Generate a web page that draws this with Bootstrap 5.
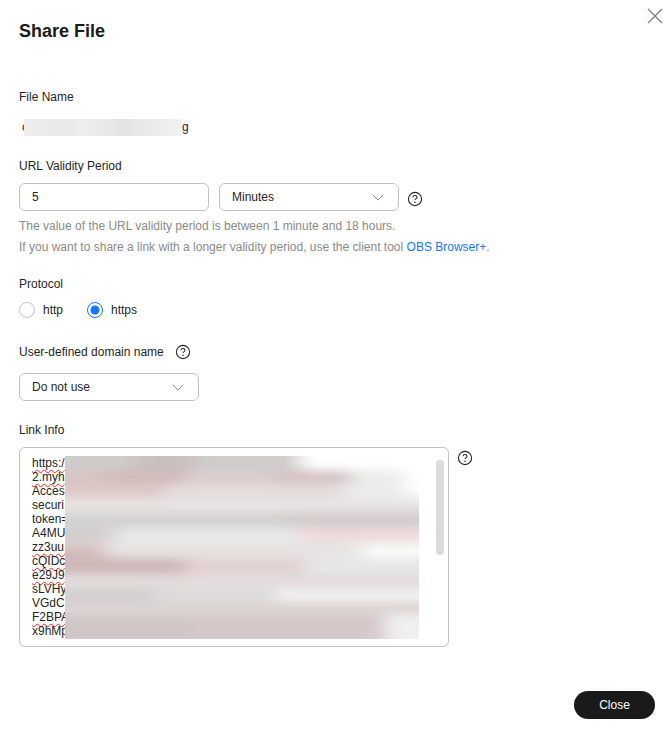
<!DOCTYPE html>
<html lang="en">
<head>
  <meta charset="UTF-8">
  <title>Share File</title>
  <meta name="viewport" content="width=device-width, initial-scale=1">
  <link href="https://cdn.jsdelivr.net/npm/bootstrap@5.3.0/dist/css/bootstrap.min.css" rel="stylesheet">
  <style>
    body {
      font-family: "Liberation Sans", Arial, sans-serif;
      font-size: 12px;
      line-height: 18px;
      color: #252525;
      background: #fff;
    }

    .share-dialog {
      width: 670px;
      height: 730px;
      padding: 8px 15px 11px 19px;
      overflow: hidden;
    }

    .share-head { height: 40px; }

    .share-title {
      font-size: 18px;
      line-height: 24px;
      font-weight: 700;
      color: #1a1a1a;
      margin: 11px 0 0;
    }

    .close-x {
      width: 16px;
      height: 16px;
      margin-right: -8px;
      padding: 0;
      border: 0;
      background: none;
      line-height: 0;
    }

    .field-label { margin-top: 0; height: 18px; }
    .label-file { margin-top: 40px; }
    .label-url { margin-top: 21px; }
    .label-protocol { margin-top: 17px; }
    .label-domain { margin-top: 24px; }
    .label-link { margin-top: 20px; }

    .file-value {
      width: 173px;
      margin-top: 12px;
      margin-left: 3px;
      height: 18px;
    }

    .file-cut {
      flex: none;
      width: 2px;
    }

    .file-blur {
      flex: none;
      width: 158px;
      height: 17px;
      background: linear-gradient(90deg, #eeeeee 0%, #e9e9e9 25%, #eeeeee 40%, #e4e4e4 62%, #ececec 85%, #f2f2f2 100%);
    }

    .share-input,
    .share-select {
      height: 28px;
      font-size: 12px;
      line-height: 18px;
      color: #252525;
      border: 1px solid #c2c2c2;
      border-radius: 6px;
      padding: 4px 12px;
      box-shadow: none;
    }

    .share-input { width: 190px; }

    .share-select {
      width: 180px;
      background-image: url("data:image/svg+xml,%3csvg xmlns='http://www.w3.org/2000/svg' viewBox='0 0 14 8'%3e%3cpath fill='none' stroke='%23808080' stroke-width='1.1' d='M1 1l6 6 6-6'/%3e%3c/svg%3e");
      background-position: right 14px center;
      background-size: 12px 7px;
    }

    .row-gap { column-gap: 10px; margin-top: 8px; }
    .row-gap-wide { margin-top: 12px; }

    .help-mark {
      flex: none;
      width: 16px;
      height: 16px;
      line-height: 0;
    }

    .help-url { margin: 8px 0 0 -2px; }
    .help-link { margin: 3px 0 0 -2px; }
    .help-domain { margin-left: 11px; }

    .hint-text {
      color: #8a8a8a;
      line-height: 21px;
    }

    .hint-first { margin-top: 5px; }

    .hint-link {
      color: #1476ff;
      text-decoration: none;
    }

    .protocol-row {
      margin-top: 8px;
      height: 18px;
    }

    .share-radio {
      display: flex;
      align-items: center;
      min-height: 0;
      margin: 0 24px 0 0;
      padding: 0;
    }

    .share-radio .form-check-input {
      float: none;
      width: 16px;
      height: 16px;
      margin: 0 8px 0 0;
      border: 1px solid #c2c2c2;
      box-shadow: none;
    }

    .share-radio .form-check-input:checked {
      background-color: #fff;
      border-color: #1476ff;
      background-image: url("data:image/svg+xml,%3csvg xmlns='http://www.w3.org/2000/svg' viewBox='0 0 16 16'%3e%3ccircle cx='8' cy='8' r='4.5' fill='%231476ff'/%3e%3c/svg%3e");
      background-size: 16px 16px;
    }

    .share-radio .form-check-label { line-height: 16px; }

    .link-box {
      width: 430px;
      height: 200px;
      border: 1px solid #c2c2c2;
      border-radius: 6px;
      padding: 8px 0 8px 12px;
    }

    .link-text {
      flex: none;
      width: 33px;
      font-size: 12px;
      line-height: 14px;
      white-space: nowrap;
      color: #252525;
    }

    .spell-bad {
      text-decoration: underline wavy #ff2020;
      text-decoration-thickness: 1px;
      text-underline-offset: 2px;
    }

    .link-blur {
      flex: none;
      width: 354px;
      height: 183px;
      display: block;
    }

    .fake-thumb {
      flex: none;
      width: 8px;
      height: 95px;
      margin: 4px 0 0 17px;
      border-radius: 4px;
      background: #dcdcdc;
    }

    .footer-row { margin-top: 44px; }

    .btn-close-share {
      width: 81px;
      height: 28px;
      padding: 0;
      font-size: 12px;
      line-height: 28px;
      border: 0;
      border-radius: 14px;
      color: #fff;
      background: #1a1a1a;
    }
  </style>
</head>
<body>

<div class="share-dialog d-flex flex-column">
  <div class="share-head d-flex justify-content-between align-items-start">
    <h1 class="share-title">Share File</h1>
    <button class="close-x" type="button" aria-label="Close">
      <svg width="16" height="16" viewBox="0 0 16 16"><path d="M1 1l14 14M15 1L1 15" fill="none" stroke="#7c7c7c" stroke-width="1.3"/></svg>
    </button>
  </div>

  <div class="field-label label-file">File Name</div>
  <div class="file-value d-flex align-items-center">
    <span class="file-cut">c</span>
    <div class="file-blur"></div>
    <span>g</span>
  </div>

  <div class="field-label label-url">URL Validity Period</div>
  <div class="d-flex row-gap">
    <input class="form-control share-input" type="text" value="5">
    <select class="form-select share-select"><option>Minutes</option></select>
    <span class="help-mark help-url">
      <svg width="16" height="16" viewBox="0 0 16 16"><circle cx="8" cy="8" r="6.6" fill="none" stroke="#252525" stroke-width="1.1"/><path d="M6 6.3c0-1.1.9-1.8 2-1.8s2 .7 2 1.7c0 1.4-2 1.4-2 2.9" fill="none" stroke="#252525" stroke-width="1.1"/><circle cx="8" cy="11.2" r=".8" fill="#252525"/></svg>
    </span>
  </div>
  <div class="hint-text hint-first">The value of the URL validity period is between 1 minute and 18 hours.</div>
  <div class="hint-text">If you want to share a link with a longer validity period, use the client tool <a class="hint-link" href="#">OBS Browser+</a>.</div>

  <div class="field-label label-protocol">Protocol</div>
  <div class="protocol-row d-flex align-items-center">
    <div class="form-check share-radio">
      <input class="form-check-input" type="radio" name="protocol" id="protoHttp">
      <label class="form-check-label" for="protoHttp">http</label>
    </div>
    <div class="form-check share-radio">
      <input class="form-check-input" type="radio" name="protocol" id="protoHttps" checked>
      <label class="form-check-label" for="protoHttps">https</label>
    </div>
  </div>

  <div class="field-label label-domain d-flex align-items-center">
    User-defined domain name
    <span class="help-mark help-domain">
      <svg width="16" height="16" viewBox="0 0 16 16"><circle cx="8" cy="8" r="6.6" fill="none" stroke="#252525" stroke-width="1.1"/><path d="M6 6.3c0-1.1.9-1.8 2-1.8s2 .7 2 1.7c0 1.4-2 1.4-2 2.9" fill="none" stroke="#252525" stroke-width="1.1"/><circle cx="8" cy="11.2" r=".8" fill="#252525"/></svg>
    </span>
  </div>
  <div class="d-flex row-gap row-gap-wide">
    <select class="form-select share-select"><option>Do not use</option></select>
  </div>

  <div class="field-label label-link">Link Info</div>
  <div class="d-flex row-gap">
    <div class="link-box d-flex">
      <div class="link-text">
        <div><span class="spell-bad">https:/</span></div>
        <div><span class="spell-bad">2.myh</span></div>
        <div>Acces</div>
        <div>securi</div>
        <div>token=</div>
        <div>A4MU</div>
        <div><span class="spell-bad">zz3uu.</span></div>
        <div><span class="spell-bad">cQIDc</span></div>
        <div><span class="spell-bad">e29J9</span></div>
        <div>sLVHy</div>
        <div>VGdC</div>
        <div><span class="spell-bad">F2BPA</span></div>
        <div>x9hMp</div>
      </div>
      <svg class="link-blur" viewBox="0 0 354 183" aria-hidden="true">
        <defs><filter id="smear" x="-10%" y="-10%" width="120%" height="120%"><feGaussianBlur stdDeviation="10 5"/></filter></defs>
        <g filter="url(#smear)">
          <rect x="-20" y="-20" width="400" height="230" fill="#ececec"/>
          <rect x="-20" y="-20" width="260" height="34" fill="#cfcccc"/>
          <rect x="70" y="-20" width="60" height="34" fill="#c9bfbf"/>
          <rect x="235" y="-20" width="140" height="34" fill="#fff"/>
          <rect x="340" y="-20" width="40" height="60" fill="#fff"/>
          <rect x="-20" y="14" width="60" height="14" fill="#d8c4c4"/>
          <rect x="40" y="14" width="80" height="14" fill="#d2bcbc"/>
          <rect x="120" y="14" width="90" height="14" fill="#dacdcd"/>
          <rect x="210" y="14" width="75" height="14" fill="#d5c3c3"/>
          <rect x="-20" y="28" width="120" height="14" fill="#dec8c8"/>
          <rect x="100" y="28" width="180" height="14" fill="#e6dcdc"/>
          <rect x="-20" y="42" width="400" height="14" fill="#e8e4e4"/>
          <rect x="-20" y="56" width="400" height="16" fill="#d3d2d2"/>
          <rect x="220" y="58" width="160" height="12" fill="#d3cccc"/>
          <rect x="-20" y="72" width="70" height="14" fill="#d2cdcd"/>
          <rect x="50" y="74" width="190" height="14" fill="#e9e9e9"/>
          <rect x="235" y="72" width="130" height="14" fill="#efd9d9"/>
          <rect x="-20" y="88" width="60" height="14" fill="#d6bcbc"/>
          <rect x="40" y="88" width="250" height="14" fill="#e6e2e2"/>
          <rect x="300" y="88" width="70" height="14" fill="#fafafa"/>
          <rect x="-20" y="102" width="240" height="16" fill="#cdb7b7"/>
          <rect x="120" y="102" width="120" height="16" fill="#e2d2d2"/>
          <rect x="240" y="104" width="130" height="14" fill="#e6e6e6"/>
          <rect x="-20" y="118" width="400" height="14" fill="#e3dcdc"/>
          <rect x="-20" y="132" width="110" height="14" fill="#d2d0d0"/>
          <rect x="90" y="132" width="120" height="14" fill="#dcdcdc"/>
          <rect x="210" y="134" width="170" height="12" fill="#f0f0f0"/>
          <rect x="-20" y="146" width="400" height="14" fill="#ddd3d3"/>
          <rect x="-20" y="160" width="150" height="30" fill="#d0c6c6"/>
          <rect x="130" y="160" width="190" height="30" fill="#d5c8c8"/>
          <rect x="320" y="158" width="60" height="30" fill="#f0f0f0"/>
        </g>
      </svg>
      <div class="fake-thumb"></div>
    </div>
    <span class="help-mark help-link">
      <svg width="16" height="16" viewBox="0 0 16 16"><circle cx="8" cy="8" r="6.6" fill="none" stroke="#252525" stroke-width="1.1"/><path d="M6 6.3c0-1.1.9-1.8 2-1.8s2 .7 2 1.7c0 1.4-2 1.4-2 2.9" fill="none" stroke="#252525" stroke-width="1.1"/><circle cx="8" cy="11.2" r=".8" fill="#252525"/></svg>
    </span>
  </div>

  <div class="footer-row d-flex justify-content-end">
    <button class="btn btn-close-share" type="button">Close</button>
  </div>
</div>

<script src="https://cdn.jsdelivr.net/npm/bootstrap@5.3.0/dist/js/bootstrap.bundle.min.js"></script>
</body>
</html>
